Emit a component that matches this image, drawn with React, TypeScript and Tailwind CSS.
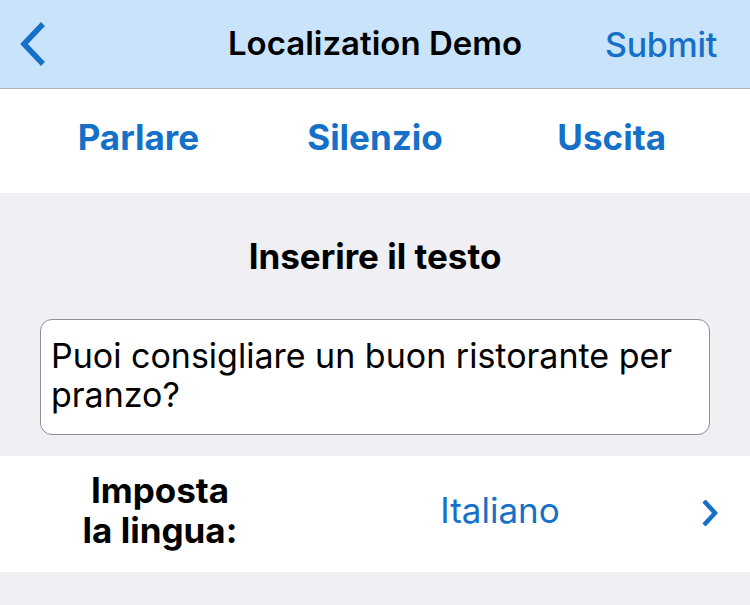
import React from "react";

export default function App() {
  const font = { fontFamily: "Inter, 'Noto Sans', sans-serif" };
  return (
    <div className="w-[750px] h-[605px] bg-[#efeff4] overflow-hidden" style={font}>
      {/* Nav bar */}
      <div className="h-[89px] bg-[#c9e3fb] border-b border-[#b0b0b0] flex items-center">
        <div className="w-[150px] pl-[19px] flex items-center">
          <svg width="28" height="46" viewBox="0 0 28 46">
            <path d="M24 3 L5 23 L24 43" fill="none" stroke="#1570c8" strokeWidth="5.5" strokeLinecap="butt" strokeLinejoin="miter" />
          </svg>
        </div>
        <div className="flex-1 text-center text-[33px] font-semibold text-black">Localization Demo</div>
        <div className="w-[150px] pr-[33px] text-right text-[34px] text-[#1570c8] font-medium tracking-[-0.3px]">Submit</div>
      </div>
      {/* Toolbar */}
      <div className="h-[104px] bg-white grid grid-cols-3 px-5 pb-[7px] items-center">
        <div className="text-center text-[35px] font-bold text-[#1570c8]">Parlare</div>
        <div className="text-center text-[35px] font-bold text-[#1570c8]">Silenzio</div>
        <div className="text-center text-[35px] font-bold text-[#1570c8]">Uscita</div>
      </div>
      {/* Gray section */}
      <div className="h-[263px] flex flex-col items-center">
        <div className="h-[126px] flex items-center justify-center text-[35px] font-bold text-black">
          Inserire il testo
        </div>
        <div className="w-[670px] h-[116px] bg-white border-[1.5px] border-[#8e8e8e] rounded-[12px] px-[10px] pt-[16px] text-[34px] leading-[39px] text-black">
          Puoi consigliare un buon ristorante per pranzo?
        </div>
      </div>
      {/* Language row */}
      <div className="h-[116px] bg-white flex items-center pb-[8px]">
        <div className="w-[320px] text-center text-[35px] font-bold leading-[40px] text-black">
          Imposta
          <br />
          la lingua:
        </div>
        <div className="flex-1 text-center text-[35px] text-[#1570c8]">Italiano</div>
        <div className="w-[70px] flex justify-start pl-[22px] pt-[6px]">
          <svg width="16" height="26" viewBox="0 0 16 26">
            <path d="M2 1 L13 13 L2 25" fill="none" stroke="#1570c8" strokeWidth="4.5" strokeLinejoin="miter" />
          </svg>
        </div>
      </div>
    </div>
  );
}
